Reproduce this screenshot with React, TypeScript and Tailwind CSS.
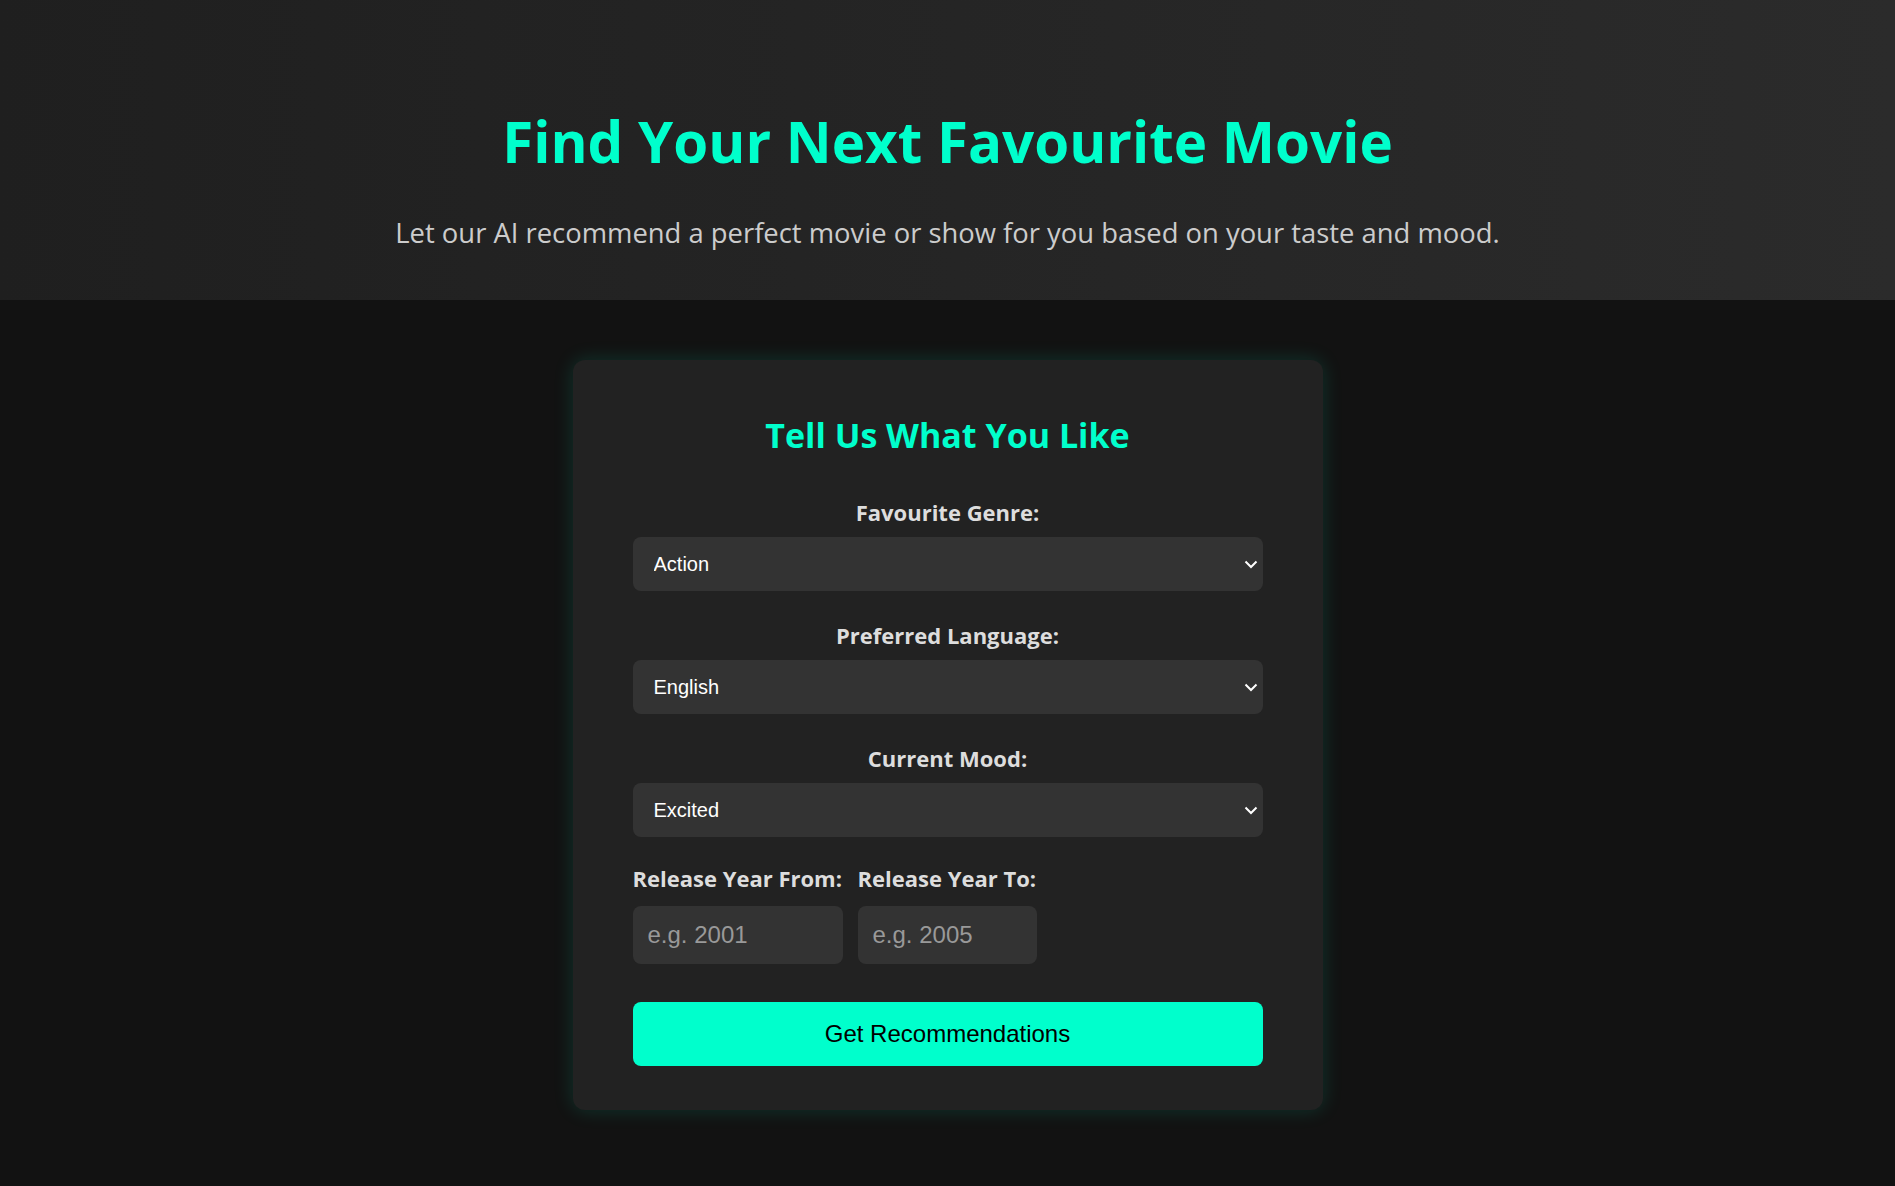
import React, { useState } from 'react';

const genres = ['Action', 'Comedy', 'Drama', 'Horror', 'Romance', 'Sci-Fi', 'Thriller', 'Animation'];
const languages = ['English', 'Hindi', 'Spanish', 'French', 'Korean', 'Japanese'];
const moods = ['Excited', 'Happy', 'Sad', 'Relaxed', 'Romantic', 'Scared'];

const headingFont = "font-['Open_Sans','Noto_Sans',sans-serif]";
const fieldFont = "font-['Liberation_Sans',Arial,sans-serif]";

// native select with our own chevron on the right
const SelectField = ({
  label,
  value,
  options,
  onChange,
  last = false,
}: {
  label: string;
  value: string;
  options: string[];
  onChange: (v: string) => void;
  last?: boolean;
}) => (
  <div className={`flex flex-col items-center ${last ? 'mb-[27px]' : 'mb-[30px]'}`}>
    <label className={`mb-[11px] text-[22px] leading-[28px] font-bold text-[#dddddd] ${headingFont}`}>
      {label}
    </label>
    <div className="relative w-full">
      <select
        value={value}
        onChange={(e) => onChange(e.target.value)}
        className={`h-[54px] w-full appearance-none rounded-[8px] bg-[#333333] pl-[21px] pr-10 text-[20px] text-white outline-none ${fieldFont}`}
      >
        {options.map((o) => (
          <option key={o} value={o}>
            {o}
          </option>
        ))}
      </select>
      <svg
        className="pointer-events-none absolute right-[5px] top-1/2 h-[14px] w-[14px] -translate-y-1/2"
        viewBox="0 0 14 14"
        fill="none"
        stroke="white"
        strokeWidth="2"
      >
        <path d="M1.5 4.5 L7 10 L12.5 4.5" />
      </svg>
    </div>
  </div>
);

export default function App() {
  const [genre, setGenre] = useState('Action');
  const [language, setLanguage] = useState('English');
  const [mood, setMood] = useState('Excited');
  const [yearFrom, setYearFrom] = useState('');
  const [yearTo, setYearTo] = useState('');

  return (
    <div className="min-h-screen bg-[#121212]">
      {/* Header */}
      <header className="flex flex-col items-center bg-linear-to-r from-[#1f1f1f] to-[#2b2b2b] pt-[106px] pb-[48px] text-center">
        <h1 className={`text-[56.5px] leading-[72px] font-bold text-[#00ffcc] ${headingFont}`}>
          Find Your Next Favourite Movie
        </h1>
        <p className={`mt-[35px] text-[27.4px] leading-[39px] text-[#cccccc] ${headingFont}`}>
          Let our AI recommend a perfect movie or show for you based on your taste and mood.
        </p>
      </header>

      {/* Form card */}
      <main className="flex justify-center pt-[60px] pb-16">
        <div className="w-[750px] rounded-[12px] bg-[#222222] px-[60px] pt-[51px] pb-[44px] shadow-[0_0_20px_rgba(0,255,204,0.15)]">
          <h2 className={`mb-[39px] text-center text-[34px] leading-[48px] font-bold text-[#00ffcc] ${headingFont}`}>
            Tell Us What You Like
          </h2>

          <SelectField label="Favourite Genre:" value={genre} options={genres} onChange={setGenre} />
          <SelectField label="Preferred Language:" value={language} options={languages} onChange={setLanguage} />
          <SelectField label="Current Mood:" value={mood} options={moods} onChange={setMood} last />

          <div className="flex gap-[15px]">
            <div className="flex w-[210px] flex-col">
              <label className={`mb-[14px] whitespace-nowrap text-[22px] leading-[28px] font-bold text-[#dddddd] ${headingFont}`}>
                Release Year From:
              </label>
              <input
                type="number"
                value={yearFrom}
                onChange={(e) => setYearFrom(e.target.value)}
                placeholder="e.g. 2001"
                className={`h-[58px] w-full rounded-[8px] bg-[#333333] px-[15px] text-[24px] text-white outline-none placeholder:text-[#999999] ${fieldFont}`}
              />
            </div>
            <div className="flex w-[179px] flex-col">
              <label className={`mb-[14px] whitespace-nowrap text-[22px] leading-[28px] font-bold text-[#dddddd] ${headingFont}`}>
                Release Year To:
              </label>
              <input
                type="number"
                value={yearTo}
                onChange={(e) => setYearTo(e.target.value)}
                placeholder="e.g. 2005"
                className={`h-[58px] w-full rounded-[8px] bg-[#333333] px-[15px] text-[24px] text-white outline-none placeholder:text-[#999999] ${fieldFont}`}
              />
            </div>
          </div>

          <button
            type="button"
            className={`mt-[38px] h-[64px] w-full rounded-[8px] bg-[#00ffcc] text-[24px] text-black ${fieldFont}`}
          >
            Get Recommendations
          </button>
        </div>
      </main>
    </div>
  );
}
